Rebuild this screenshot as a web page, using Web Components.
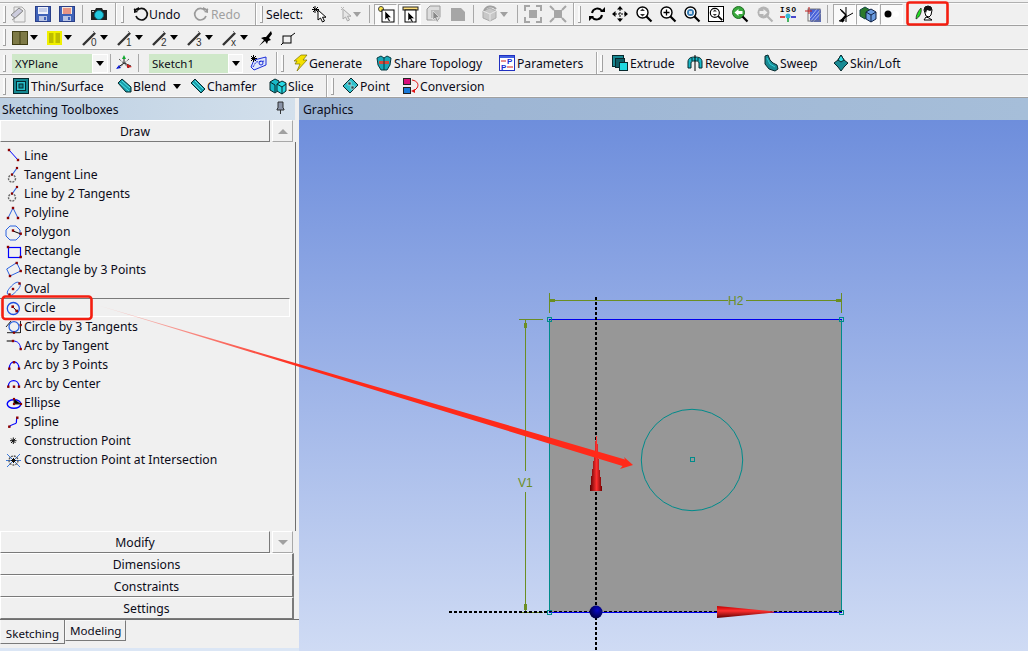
<!DOCTYPE html>
<html>
<head>
<meta charset="utf-8">
<title>Sketching</title>
<style>
  html, body { margin: 0; height: 100%; overflow: hidden; background: #f0f0f0; }
  body { font: 12.2px "Noto Sans", "DejaVu Sans", sans-serif; color: #0b0b18; }
</style>
</head>
<body>

<cad-app>
  <cad-toolbar h="26" pt="3">
    <cad-grip ml="3"></cad-grip>
    <cad-tool icon="newdoc" ml="4" w="17"></cad-tool>
    <cad-tool icon="save" ml="8"></cad-tool>
    <cad-tool icon="saveas" ml="8"></cad-tool>
    <cad-line ml="7"></cad-line>
    <cad-tool icon="camera" ml="8"></cad-tool>
    <cad-end ml="8"></cad-end>
    <cad-grip ml="4"></cad-grip>
    <cad-tool icon="undo" ml="9" w="14" tw="62">Undo</cad-tool>
    <cad-tool icon="redo" w="14" tw="60" class="off">Redo</cad-tool>
    <cad-end ml="0"></cad-end>
    <cad-grip ml="3"></cad-grip>
    <cad-tool ml="3" tw="46">Select:</cad-tool>
    <cad-tool icon="pick" w="16"></cad-tool>
    <cad-tool icon="pickoff" ml="12" w="13"></cad-tool>
    <cad-drop ml="0" off></cad-drop>
    <cad-line ml="8"></cad-line>
    <cad-tool icon="selpoint" ml="4" w="23" box></cad-tool>
    <cad-tool icon="seledge" ml="1" w="23" box></cad-tool>
    <cad-tool icon="selface" ml="5"></cad-tool>
    <cad-tool icon="selbody" ml="8"></cad-tool>
    <cad-line ml="7"></cad-line>
    <cad-tool icon="extend" ml="8"></cad-tool>
    <cad-drop ml="2" off></cad-drop>
    <cad-line ml="9"></cad-line>
    <cad-tool icon="expand" ml="7"></cad-tool>
    <cad-tool icon="shrink" ml="9"></cad-tool>
    <cad-end ml="7"></cad-end>
    <cad-grip ml="3"></cad-grip>
    <cad-tool icon="rotate" ml="8"></cad-tool>
    <cad-tool icon="pan" ml="7"></cad-tool>
    <cad-tool icon="zoomud" ml="8"></cad-tool>
    <cad-tool icon="zoomplus" ml="8"></cad-tool>
    <cad-tool icon="zoomfit" ml="8"></cad-tool>
    <cad-tool icon="zoombox" ml="8"></cad-tool>
    <cad-tool icon="zoomback" ml="8"></cad-tool>
    <cad-tool icon="zoomnext" ml="9"></cad-tool>
    <cad-tool icon="iso" ml="7"></cad-tool>
    <cad-tool icon="plane" ml="9"></cad-tool>
    <cad-line ml="6"></cad-line>
    <cad-tool icon="axes" ml="5" w="23" box></cad-tool>
    <cad-tool icon="cube" ml="0" w="23" box></cad-tool>
    <cad-tool icon="dot" ml="1" w="23" box></cad-tool>
    <cad-tool icon="look" ml="13" w="20"></cad-tool>
  </cad-toolbar>

  <cad-toolbar h="24">
    <cad-grip ml="3"></cad-grip>
    <cad-tool icon="panelolive" ml="6"></cad-tool>
    <cad-drop ml="2"></cad-drop>
    <cad-tool icon="panelyellow" ml="9" w="14"></cad-tool>
    <cad-drop ml="3"></cad-drop>
    <cad-tool icon="l0" ml="10" w="14"></cad-tool>
    <cad-drop ml="4"></cad-drop>
    <cad-tool icon="l1" ml="9" w="14"></cad-tool>
    <cad-drop ml="4"></cad-drop>
    <cad-tool icon="l2" ml="9" w="14"></cad-tool>
    <cad-drop ml="4"></cad-drop>
    <cad-tool icon="l3" ml="9" w="14"></cad-tool>
    <cad-drop ml="4"></cad-drop>
    <cad-tool icon="lx" ml="9" w="14"></cad-tool>
    <cad-drop ml="4"></cad-drop>
    <cad-tool icon="blackplane" ml="9"></cad-tool>
    <cad-tool icon="smallrect" ml="8" w="15"></cad-tool>
  </cad-toolbar>

  <cad-toolbar h="25" pt="2">
    <cad-grip ml="3"></cad-grip>
    <cad-combo ml="6" w="96" fw="80">XYPlane</cad-combo>
    <cad-line ml="2"></cad-line>
    <cad-tool icon="triad" ml="5"></cad-tool>
    <cad-line ml="6"></cad-line>
    <cad-combo ml="10" w="94" fw="79">Sketch1</cad-combo>
    <cad-tool icon="newsketch" ml="8"></cad-tool>
    <cad-end ml="9"></cad-end>
    <cad-grip ml="3"></cad-grip>
    <cad-tool icon="generate" ml="10" w="13" tw="68">Generate</cad-tool>
    <cad-tool icon="share" ml="14" tw="110">Share Topology</cad-tool>
    <cad-tool icon="params" ml="13" tw="84">Parameters</cad-tool>
    <cad-end ml="13"></cad-end>
    <cad-grip ml="2"></cad-grip>
    <cad-tool icon="extrude" ml="9" tw="61">Extrude</cad-tool>
    <cad-tool icon="revolve" ml="14" tw="62">Revolve</cad-tool>
    <cad-tool icon="sweep" ml="14" w="15" tw="55">Sweep</cad-tool>
    <cad-tool icon="loft" ml="16" w="14" tw="67">Skin/Loft</cad-tool>
  </cad-toolbar>

  <cad-toolbar h="23">
    <cad-grip ml="3"></cad-grip>
    <cad-tool icon="thin" ml="7" tw="89">Thin/Surface</cad-tool>
    <cad-tool icon="blend" ml="15" w="14" tw="49">Blend</cad-tool>
    <cad-drop ml="7"></cad-drop>
    <cad-tool icon="chamfer" ml="10" w="14" tw="66">Chamfer</cad-tool>
    <cad-tool icon="slice" ml="13" tw="44">Slice</cad-tool>
    <cad-end ml="12"></cad-end>
    <cad-grip ml="3"></cad-grip>
    <cad-tool icon="point" ml="9" w="15" tw="46">Point</cad-tool>
    <cad-tool icon="conversion" ml="14" w="15" tw="82">Conversion</cad-tool>
  </cad-toolbar>

  <cad-workspace>
    <cad-panel slot="left">
      <cad-header>Sketching Toolboxes<cad-icon slot="end" name="pin"></cad-icon></cad-header>
      <cad-section arrow="up">Draw</cad-section>
      <cad-list>
        <cad-item icon="line">Line</cad-item>
        <cad-item icon="tangent">Tangent Line</cad-item>
        <cad-item icon="tangent">Line by 2 Tangents</cad-item>
        <cad-item icon="polyline">Polyline</cad-item>
        <cad-item icon="polygon">Polygon</cad-item>
        <cad-item icon="rectangle">Rectangle</cad-item>
        <cad-item icon="rect3">Rectangle by 3 Points</cad-item>
        <cad-item icon="oval">Oval</cad-item>
        <cad-item icon="circle" active>Circle</cad-item>
        <cad-item icon="circle3">Circle by 3 Tangents</cad-item>
        <cad-item icon="arctan">Arc by Tangent</cad-item>
        <cad-item icon="arc3">Arc by 3 Points</cad-item>
        <cad-item icon="arccenter">Arc by Center</cad-item>
        <cad-item icon="ellipse">Ellipse</cad-item>
        <cad-item icon="spline">Spline</cad-item>
        <cad-item icon="cpoint">Construction Point</cad-item>
        <cad-item icon="cpointx">Construction Point at Intersection</cad-item>
      </cad-list>
      <cad-section arrow="down">Modify</cad-section>
      <cad-section>Dimensions</cad-section>
      <cad-section>Constraints</cad-section>
      <cad-section>Settings</cad-section>
      <cad-tabs>
        <cad-tab selected>Sketching</cad-tab>
        <cad-tab>Modeling</cad-tab>
      </cad-tabs>
    </cad-panel>
    <cad-graphics slot="right"></cad-graphics>
  </cad-workspace>

  <cad-callouts></cad-callouts>
</cad-app>

<script>
// icons are all drawn on the pixel grid of the original toolbars
const R = '#8b0000', B = '#0000ff';
const dots = (pts, r = 1.5) => pts.map(p => `<rect x="${p[0] - r}" y="${p[1] - r}" width="${r * 2}" height="${r * 2}" fill="${R}"/>`).join('');
const lens = (inner) => `<circle cx="6.5" cy="6.5" r="5.5" fill="#fff" stroke="#000" stroke-width="1.4"/><path d="M10.5 10.5l5 5" stroke="#000" stroke-width="2.2"/>${inner}`;
const cursor = (x, y, fill = '#000') => `<path transform="translate(${x} ${y})" d="M0 0v9l2-2 2 4 1.500-.7-2-3.800h3z" fill="${fill}" stroke="#fff" stroke-width=".5"/>`;
const lineTool = (ch) => `<path d="M1 15L13 3" stroke="#333" stroke-width="2.400"/><path d="M11 1l3 3" stroke="#777"/><text x="9" y="16" font-size="10" font-family="Liberation Sans" fill="#333">${ch}</text>`;
const ICONS = {
  newdoc: `<path d="M4 1h8l3 3v12H4z" fill="#eee" stroke="#aaa"/><path d="M1 9l8-7 4 3-8 7z" fill="#ccd" stroke="#888"/><path d="M2 14l3-2 8-7" stroke="#999" fill="none"/>`,
  save: `<rect x=".5" y=".5" width="15" height="15" fill="#3f62b8" stroke="#2a3f88"/><rect x="3" y="1" width="10" height="7" fill="#eef1fa"/><path d="M4 3h8M4 5h8" stroke="#9aa9d8"/><rect x="4" y="10" width="8" height="5" fill="#b9c4e4"/><rect x="9" y="11" width="2" height="3" fill="#3f62b8"/>`,
  saveas: `<rect x=".5" y=".5" width="15" height="15" fill="#3f62b8" stroke="#2a3f88"/><rect x="3" y="1" width="10" height="7" fill="#f6e9dc"/><path d="M4 3h8M4 5h8M4 7h8" stroke="#d8402c"/><rect x="4" y="10" width="8" height="5" fill="#b9c4e4"/><rect x="9" y="11" width="2" height="3" fill="#3f62b8"/>`,
  camera: `<path d="M0 4h4l1-2h6l1 2h4v10H0z" fill="#222"/><circle cx="8" cy="9" r="4.500" fill="#25c9e0" stroke="#0b6f80"/><rect x="1" y="5" width="2" height="1" fill="#ccc"/>`,
  undo: `<path d="M4 4.500A5.800 5.800 0 1 1 3 10" fill="none" stroke="#111" stroke-width="1.700"/><path d="M0 4h6v-3z M1 2v5l4-1z" fill="#111"/>`,
  redo: `<path d="M10 4.500A5.800 5.800 0 1 0 11 10" fill="none" stroke="#9a9a9a" stroke-width="1.700"/><path d="M14 4H8V1zM13 2v5L9 6z" fill="#9a9a9a"/>`,
  pick: `<path d="M3 0v7M0 3.500h7M1 1l5 5M6 1l-5 5" stroke="#000"/><path d="M6 4v10l2.500-2 2 4 2-1-2-3.800h3.500z" fill="#fff" stroke="#000"/>`,
  pickoff: `<path d="M3 3v10l2.500-2 2 4 2-1-2-3.800h3.500z" fill="#e6e6e6" stroke="#a8a8a8"/><path d="M1 1l3 3M4 1l-3 3" stroke="#b8b8b8"/>`,
  selpoint: `<circle cx="3" cy="3" r="2.500" fill="#ffe94a" stroke="#444"/><rect x="4" y="4" width="12" height="12" fill="#fff" stroke="#000"/>${cursor(7, 5)}`,
  seledge: `<rect x="1" y="1" width="15" height="3" fill="#ffe07a" stroke="#222"/><rect x="3" y="4" width="11" height="12" fill="#fff" stroke="#000"/>${cursor(6, 6)}`,
  selface: `<path d="M1 3l3-3h10v11l-2 3H1z" fill="#ddd" stroke="#9a9a9a"/><path d="M5 4h8v8H5z" fill="#bbb"/>${cursor(7, 5, '#888')}`,
  selbody: `<path d="M1 2h10l4 4v9H1z" fill="#a6a6a6"/>`,
  extend: `<path d="M1 5l7-3 6 3v7l-6 3-7-3z" fill="#c8c8c8" stroke="#aaa"/><path d="M2 5a7 7 0 0 1 12-2" stroke="#a0a0a0" stroke-width="2" fill="none"/><path d="M8 8v7M1 5l7 3 6-3" stroke="#e8e8e8" fill="none"/>`,
  expand: `<rect x="4" y="4" width="8" height="8" fill="#a6a6a6"/><path d="M0 5V0h5M11 0h5v5M16 11v5h-5M5 16H0v-5" stroke="#a6a6a6" stroke-width="2" fill="none"/>`,
  shrink: `<rect x="4" y="4" width="8" height="8" fill="#a6a6a6"/><path d="M0 0l4 4M16 0l-4 4M16 16l-4-4M0 16l4-4" stroke="#a6a6a6" stroke-width="2"/>`,
  rotate: `<path d="M3 7a5.500 5.500 0 0 1 10-2M13 9a5.500 5.500 0 0 1-10 2" fill="none" stroke="#000" stroke-width="2"/><path d="M11 6h5V1zM5 10H0v5z" fill="#000"/>`,
  pan: `<path d="M8 0l3 3.500H5zM8 16l3-3.500H5zM0 8l3.500-3v6zM16 8l-3.500-3v6z" fill="#000"/><path d="M3 8h10M8 3v10" stroke="#000" stroke-dasharray="2 1"/>`,
  zoomud: lens(`<path d="M6.500 2.500l2.500 2.500H4zM6.500 10.500L4 8h5z" fill="#333"/>`),
  zoomplus: lens(`<path d="M3.500 6.500h6M6.500 3.500v6" stroke="#000" stroke-width="1.300"/>`),
  zoomfit: lens(`<circle cx="6.500" cy="6.500" r="3.500" fill="#3a7fb5"/><rect x="5" y="5" width="3" height="3" fill="#cde"/>`),
  zoombox: `<rect x=".5" y=".5" width="15" height="15" fill="#fff" stroke="#000"/><g transform="translate(1.500 1.500) scale(.82)">${lens(`<path d="M6.500 2.500l2.500 2.500H4zM6.500 10.500L4 8h5z" fill="#333"/>`)}</g>`,
  zoomback: `<circle cx="6.500" cy="6.500" r="6" fill="#38a83c" stroke="#1e6e22"/><path d="M10.500 10.500l5 5" stroke="#000" stroke-width="2.200"/><path d="M2.500 6.500l4-3.500v2h4v3h-4v2z" fill="#fff"/>`,
  zoomnext: `<circle cx="6.500" cy="6.500" r="6" fill="#b4b4b4"/><path d="M10.500 10.500l5 5" stroke="#b4b4b4" stroke-width="2.200"/><path d="M10.500 6.500l-4-3.500v2h-4v3h4v2z" fill="#eee"/>`,
  iso: `<text x="0" y="6" font-size="7.500" font-weight="700" font-family="Liberation Mono" fill="#000" textLength="16">ISO</text><circle cx="8" cy="10" r="2.500" fill="#33b8d8"/><path d="M0 11h5" stroke="#d01010" stroke-width="1.500"/><path d="M11 11h5" stroke="#1010c0" stroke-width="1.500"/><path d="M8 12v4" stroke="#10a030" stroke-width="1.500"/>`,
  plane: `<rect x="5" y="3" width="11" height="13" fill="#4a62d8"/><path d="M5 16L16 3M8 16L16 7M5 12l7-9" stroke="#aab8f0"/><rect x="3" y="3" width="12" height="12" fill="none" stroke="#777"/><path d="M0 5h7M4 1v7" stroke="#c02020"/>`,
  axes: `<path d="M9 1v15M2 15L16 7M3 3l6 6" stroke="#000"/><path d="M9 9l-5 6 2 0-1 1zM9 9l-5-5" stroke="#000" stroke-width="1.600"/>`,
  cube: `<path d="M0 4l5-3 5 3v6l-5 3-5-3z" fill="#2c7a2c" stroke="#144"/><path d="M6 6l5-3 5 3v7l-5 3-5-3z" fill="#6a9ce0" stroke="#124"/><path d="M6 6l5 3 5-3M11 9v7" stroke="#124" fill="none"/>`,
  dot: `<circle cx="4" cy="8" r="3.500" fill="#000"/><circle cx="12" cy="8" r="3" fill="#fff"/>`,
  look: `<path d="M0 13C0 9 2 5 5 2 6 6 4 11 0 13z" fill="#22dd22" stroke="#111" stroke-width=".7"/><path d="M8 4a4 4 0 0 1 8 0l-1 5-2 2-3-1-1-3z" fill="#fff" stroke="#000"/><path d="M8 4a4 4 0 0 1 8 0l-2 1-3-1-1 3z" fill="#111"/><path d="M8 14l2-3 3 1 3 2z" fill="#fff" stroke="#000"/>`,
  panelolive: `<rect x=".5" y="1.500" width="15" height="13" fill="#7e7a46" stroke="#3f3d12"/><path d="M8 2v12" stroke="#3f3d12"/>`,
  panelyellow: `<rect x="1" y="2" width="13" height="12" fill="#bdbd00" stroke="#f0f000" stroke-width="2"/><path d="M7.500 2v12" stroke="#f0f000" stroke-width="2"/>`,
  l0: lineTool('0'), l1: lineTool('1'), l2: lineTool('2'), l3: lineTool('3'), lx: lineTool('x'),
  blackplane: `<path d="M9 7l5-6 1 3-3 4 2 2-3 1-1 3-2-3-6 5 5-6-3-2 3-1z" fill="#000"/>`,
  smallrect: `<rect x="2" y="6" width="8" height="7" fill="none" stroke="#000"/><path d="M10 6l4-3M2 13l-2 2" stroke="#000"/>`,
  triad: `<path d="M8 8V2M8 8L1 13M8 8l7 3" stroke="#222"/><path d="M8 0l2 4H6z" fill="#11a830"/><path d="M0 14l3-4 2 3z" fill="#1020e0"/><path d="M16 12l-5-3v4z" fill="#d01818"/><path d="M3 4l10 9M13 4L3 13" stroke="#222" stroke-dasharray="1 1"/>`,
  newsketch: `<path d="M0 12l3-7 12-3v8L3 15z" fill="#dfe6fa" stroke="#1c2ed8"/><path d="M2 12l3-5 9-1" stroke="#1c2ed8" stroke-dasharray="2 1" fill="none"/><circle cx="10" cy="8" r="2" fill="none" stroke="#1c2ed8"/><path d="M0 1l5 5M5 1L0 6M2.500 0v7M0 3.500h6" stroke="#000"/>`,
  generate: `<path d="M7 0h6L9 5h4L3 16l3-7H1l2-3H0z" fill="#f4e000" stroke="#7a7000" stroke-width=".7"/>`,
  share: `<path d="M1 3l4-2 3 2 3-2 4 2-1 7-3 5H5l-3-5z" fill="#18a8b8" stroke="#063b42"/><path d="M3 6h10v3H3z" fill="#d84838"/><path d="M8 3v12" stroke="#063b42"/>`,
  params: `<rect x=".5" y=".5" width="15" height="15" fill="#fff" stroke="#2030c0"/><rect x="1" y="1" width="14" height="2" fill="#4060e0"/><text x="8" y="9" font-size="8" font-weight="700" font-family="Liberation Sans" fill="#1a30d0">P</text><text x="2" y="15" font-size="8" font-weight="700" font-family="Liberation Sans" fill="#1a30d0">P</text><path d="M2 6h5M8 12h6" stroke="#d02020"/>`,
  extrude: `<rect x=".5" y=".5" width="11" height="11" fill="#188a94" stroke="#07282c"/><rect x="3.500" y="3.500" width="9" height="9" fill="#0d5e66" stroke="#07282c"/><rect x="7.500" y="7.500" width="8" height="8" fill="#20d8e0" stroke="#07282c"/>`,
  revolve: `<path d="M1 13V7c0-4 3-5 7-5s7 1 7 5v6h-3V8c0-2-2-2-4-2s-4 0-4 2v5z" fill="#18b8c8" stroke="#07282c"/><path d="M8 0v16" stroke="#000"/><path d="M5 3v3M11 3v3" stroke="#07282c"/>`,
  sweep: `<path d="M2 1l3-1 2 5 3 3 4 2 1 4-3 2-6-2-4-5z" fill="#188a94" stroke="#07282c"/><path d="M4 3l3 6 5 3" stroke="#30d0d8" fill="none"/>`,
  loft: `<path d="M7 0l3 5 4 3-4 4-3 4-3-4-4-4 4-3z" fill="#188a94" stroke="#07282c"/><path d="M7 0l3 5-3 2-3-2z" fill="#30d8e0" stroke="#07282c"/>`,
  thin: `<rect x=".5" y=".5" width="15" height="15" fill="#158892" stroke="#07282c"/><rect x="3.500" y="3.500" width="9" height="9" fill="#28c0cc" stroke="#07282c"/><rect x="6" y="6" width="4" height="4" fill="#158892" stroke="#07282c"/>`,
  blend: `<path d="M1 5l4-4 9 8v5H9z" fill="#18a0ac" stroke="#07282c"/><path d="M3 5l9 8M5 3l8 7" stroke="#5ce0e8"/>`,
  chamfer: `<path d="M0 5l4-4 10 10-4 4z" fill="#18a0ac" stroke="#07282c"/><path d="M2 5l8 8M4 3l8 8" stroke="#5ce0e8"/>`,
  slice: `<path d="M0 4l5-3 4 2v9l-4 3-5-3z" fill="#18b8c8" stroke="#07282c"/><path d="M7 6l5-3 4 2v8l-4 3-5-3z" fill="#28d8e4" stroke="#07282c"/><path d="M7 6l5 3 4-3M12 9v7M0 4l5 3v7" stroke="#07282c" fill="none"/>`,
  point: `<path d="M0 8l8-8 7 7-8 8z" fill="#30c0cc" stroke="#07282c"/><rect x="5" y="4" width="3" height="3" fill="#1a4a50" stroke="#fff" stroke-width=".5"/><rect x="8" y="8" width="3" height="3" fill="#1a4a50" stroke="#fff" stroke-width=".5"/>`,
  conversion: `<rect x=".5" y=".5" width="7" height="6" fill="#d8107c" stroke="#222"/><rect x=".5" y="9.500" width="7" height="6" fill="#1878d8" stroke="#222"/><path d="M9 2c6 1 7 5 5 8l-3 3" fill="none" stroke="#e01010"/><path d="M8 13l4-2v4z" fill="#e01010"/>`,
  pin: `<path d="M3 1h5v6l1 1v1H2V8l1-1zM5.500 9v4" fill="#8a94a8" stroke="#222" stroke-width=".9"/>`,
  // tool list icons, 18x18, measured against the list rows
  line: `<path d="M7 3l9 10" stroke="${B}"/>${dots([[7, 3], [16, 13]], 1.2)}`,
  tangent: `<circle cx="10" cy="12.500" r="3.500" fill="none" stroke="#666" stroke-dasharray="2 1" stroke-width="1.400"/><path d="M10 9l5-7" stroke="#2b62e0" stroke-width="1.200"/>${dots([[15, 2], [10, 8.500]], 1.1)}`,
  polyline: `<path d="M6 14l5-10 5 10" fill="none" stroke="#2b62e0"/>${dots([[6, 14], [11, 4], [16, 14]], 1.2)}`,
  polygon: `<path d="M8 3h6l4 4v6l-4 4H8l-4-4V7z" fill="none" stroke="#2b62e0"/><path d="M11 8l8 3" stroke="#000"/>${dots([[11, 7.500], [18.700, 10.700]], 1.200)}`,
  rectangle: `<rect x="6.500" y="5.500" width="12" height="10" fill="none" stroke="${B}" stroke-width="1.200"/>${dots([[6, 5], [18.700, 15]], 1.200)}`,
  rect3: `<path d="M4.700 8l10-6.300 4 8.300-10.700 5z" fill="none" stroke="#2b62e0"/>${dots([[14.700, 2], [18.700, 10], [8, 15]], 1.200)}`,
  oval: `<path d="M6.500 15c-3-2 0-6 3-9s6-5 8-3 0 5-3 8-6 6-8 4z" fill="none" stroke="#2b62e0"/>${dots([[7.500, 14.500], [17.500, 3.500], [11, 9]], 1.200)}`,
  circle: `<circle cx="11.300" cy="9.500" r="6" fill="none" stroke="#1f50e0" stroke-width="1.300"/><path d="M10.700 7.700l4 4.300" stroke="#000"/>${dots([[10.700, 7.700], [14.700, 12]], 1.300)}`,
  circle3: `<circle cx="12" cy="8.700" r="5" fill="none" stroke="#2b62e0" stroke-width="1.300"/><path d="M5 14.700h13M18.500 3v12M4 9l5-6" stroke="#222" fill="none"/>${dots([[18.700, 7], [12, 14.700]], 1.100)}`,
  arctan: `<path d="M4.700 4H11" stroke="#000"/><path d="M11 4c5 0 7.500 3 7.500 8" fill="none" stroke="${B}"/>${dots([[11, 4], [18.700, 12]], 1.200)}`,
  arc3: `<path d="M7.300 12.700c0-9 9.700-9 9.700 0" fill="none" stroke="${B}" stroke-width="1.300"/>${dots([[7.300, 12.700], [12, 6.300], [17, 12.700]], 1.200)}`,
  arccenter: `<path d="M6.300 11.700c0-8 10.700-8 10.700 0" fill="none" stroke="${B}" stroke-width="1.300"/>${dots([[6.300, 11.700], [12, 11.700], [17, 11.700]], 1.200)}`,
  ellipse: `<ellipse cx="12" cy="10" rx="6.800" ry="4.300" fill="none" stroke="${B}" stroke-width="1.400"/><path d="M12 5v5h7" stroke="#333"/>${dots([[12, 5], [12, 10], [19, 10]], 1.100)}`,
  spline: `<path d="M7.300 13.700c2-3 6-2 7-4 .5-1.500-.5-3 1-5" fill="none" stroke="${B}" stroke-width="1.200"/>${dots([[7.300, 13.700], [15.300, 4.700]], 1.200)}`,
  cpoint: `<path d="M11.300 5.500v6.500M8 8.700h6.500M9 6.500l4.500 4.500M13.500 6.500L9 11" stroke="#111"/>`,
  cpointx: `<path d="M5 3l13 13M18 3L5 16M4 9.500h15" stroke="#3a78d8"/><circle cx="11.500" cy="9.500" r="4.500" fill="none" stroke="#555" stroke-dasharray="2 1" stroke-width="1.300"/><path d="M11.500 7v5M9 9.500h5M10 8l3 3M13 8l-3 3" stroke="#111"/>`
};

// shared helper: the ml attribute becomes the host's flow margin
function place(el) {
  if (el.hasAttribute('ml')) el.style.marginLeft = el.getAttribute('ml') + 'px';
}

class CadApp extends HTMLElement {
  constructor() {
    super();
    this.attachShadow({ mode: 'open' }).innerHTML = `
      <style>
        :host { display:flex; flex-direction:column; position:relative; width:1028px; height:651px; overflow:hidden; background:#f0f0f0; }
      </style>
      <slot></slot>`;
  }
}

class CadToolbar extends HTMLElement {
  constructor() {
    super();
    this.attachShadow({ mode: 'open' }).innerHTML = `
      <style>
        :host { display:flex; align-items:center; flex:none; box-sizing:border-box; border-bottom:1px solid #a0a0a0; box-shadow:inset 0 -1px 0 #f8f8f8; white-space:nowrap; }
        :host([pt="3"]) { background:linear-gradient(#f0f0f0 2px,#b0b0b0 2px,#b0b0b0 3px,#fafafa 3px,#fafafa 4px,#f0f0f0 4px); }
      </style>
      <slot></slot>`;
  }
  connectedCallback() {
    this.style.height = this.getAttribute('h') + 'px';
    if (this.hasAttribute('pt')) this.style.paddingTop = this.getAttribute('pt') + 'px';
  }
}

class CadIcon extends HTMLElement {
  constructor() {
    super();
    this.attachShadow({ mode: 'open' });
  }
  connectedCallback() {
    const w = this.getAttribute('w') || 16, h = this.getAttribute('h') || 16;
    this.shadowRoot.innerHTML = `
      <style>:host { display:inline-flex; flex:none; } svg { display:block; overflow:visible; }</style>
      <svg width="${w}" height="${h}" viewBox="0 0 ${w} ${h}">${ICONS[this.getAttribute('name')] || ''}</svg>`;
  }
}

class CadTool extends HTMLElement {
  constructor() {
    super();
    this.attachShadow({ mode: 'open' });
  }
  connectedCallback() {
    place(this);
    const icon = this.getAttribute('icon');
    const w = this.getAttribute('w') || 16;
    const boxed = this.hasAttribute('box');
    this.shadowRoot.innerHTML = `
      <style>
        :host { display:inline-flex; align-items:center; gap:2px; flex:none; }
        :host(.off) { color:#a0a0a0; }
        :host([box]) { height:21px; justify-content:center; background:#fafafa; border:1px solid; border-color:#a8a8a8 #fff #fff #a8a8a8; box-sizing:border-box; }
      </style>
      ${icon ? `<cad-icon name="${icon}" w="${boxed ? 16 : w}"></cad-icon>` : ''}<slot></slot>`;
    if (boxed) this.style.width = w + 'px';
    if (this.hasAttribute('tw')) this.style.width = this.getAttribute('tw') + 'px';
  }
}

// the etched handle at the start of a toolbar group, a line with a short foot
class CadGrip extends HTMLElement {
  constructor() {
    super();
    this.attachShadow({ mode: 'open' }).innerHTML = `
      <style>:host { display:block; flex:none; width:3px; height:17px; background:#fafafa; border-right:1px solid #a0a0a0; border-bottom:1px solid #a0a0a0; box-sizing:border-box; }</style>`;
  }
  connectedCallback() { place(this); }
}

class CadLine extends HTMLElement {
  constructor() {
    super();
    this.attachShadow({ mode: 'open' }).innerHTML = `
      <style>:host { display:block; flex:none; width:1px; height:18px; background:#a8a8a8; }</style>`;
  }
  connectedCallback() { place(this); }
}

// the raised end of a toolbar group
class CadEnd extends HTMLElement {
  constructor() {
    super();
    this.attachShadow({ mode: 'open' }).innerHTML = `
      <style>:host { display:block; flex:none; width:2px; align-self:stretch; background:#a8a8a8; border-right:1px solid #fff; box-sizing:border-box; }</style>`;
  }
  connectedCallback() { place(this); }
}

class CadDrop extends HTMLElement {
  constructor() {
    super();
    this.attachShadow({ mode: 'open' }).innerHTML = `
      <style>
        :host { display:block; flex:none; width:0; height:0; border:4px solid transparent; border-top:5px solid #000; border-bottom:0; }
        :host([off]) { border-top-color:#a0a0a0; }
      </style>`;
  }
  connectedCallback() { place(this); }
}

class CadCombo extends HTMLElement {
  constructor() {
    super();
    this.attachShadow({ mode: 'open' }).innerHTML = `
      <style>
        :host { display:flex; flex:none; height:19px; box-sizing:border-box; background:#fff; line-height:19px; font-size:11.400px; }
        .field { background:#cfe8c9; padding-left:3px; box-sizing:border-box; height:100%; }
        .btn { flex:1; display:flex; align-items:center; justify-content:center; background:#f4f4f4; border:1px solid #fff; }
        .btn i { width:0; height:0; border:4px solid transparent; border-top:5px solid #000; border-bottom:0; }
      </style>
      <div class="field"><slot></slot></div>
      <div class="btn"><i></i></div>`;
  }
  connectedCallback() {
    place(this);
    this.style.width = this.getAttribute('w') + 'px';
    this.shadowRoot.querySelector('.field').style.width = this.getAttribute('fw') + 'px';
  }
}

class CadWorkspace extends HTMLElement {
  constructor() {
    super();
    this.attachShadow({ mode: 'open' }).innerHTML = `
      <style>
        :host { display:grid; grid-template-columns:299px 1fr; flex:1; min-height:0; }
      </style>
      <slot name="left"></slot><slot name="right"></slot>`;
  }
}

class CadPanel extends HTMLElement {
  constructor() {
    super();
    this.attachShadow({ mode: 'open' }).innerHTML = `
      <style>
        :host { display:flex; flex-direction:column; min-height:0; background:#f0f0f0; }
      </style>
      <slot></slot>`;
  }
}

class CadHeader extends HTMLElement {
  constructor() {
    super();
    this.attachShadow({ mode: 'open' }).innerHTML = `
      <style>
        :host { display:flex; align-items:center; justify-content:space-between; flex:none; box-sizing:border-box; width:295px; height:22px; padding:0 4px 0 2px; background:linear-gradient(90deg,#bccfe2,#d3e0ec); }
      </style>
      <span><slot></slot></span><slot name="end"></slot>`;
  }
}

class CadSection extends HTMLElement {
  constructor() {
    super();
    this.attachShadow({ mode: 'open' }).innerHTML = `
      <style>
        :host { display:flex; flex:none; box-sizing:border-box; width:295px; height:22px; gap:2px; padding-right:1px; }
        .label { flex:1; display:flex; align-items:center; justify-content:center; background:#f0f0f0; border:1px solid; border-color:#fff #7a7a7a #7a7a7a #fff; box-sizing:border-box; border-right-width:2px; }
        .arrow { width:21px; display:none; align-items:center; justify-content:center; background:#f0f0f0; border:1px solid; border-color:#fff #a8a8a8 #a8a8a8 #fff; box-sizing:border-box; }
        .arrow i { width:0; height:0; border:5px solid transparent; border-top:0; border-bottom:5px solid #a0a0a0; }
        :host([arrow]) { width:294px; }
        :host([arrow]) .arrow { display:flex; }
        :host([arrow]) .label { border-right-width:1px; }
        :host([arrow="down"]) .arrow i { border-top:5px solid #a0a0a0; border-bottom:0; }
      </style>
      <div class="label"><slot></slot></div>
      <div class="arrow"><i></i></div>`;
  }
}

class CadList extends HTMLElement {
  constructor() {
    super();
    this.attachShadow({ mode: 'open' }).innerHTML = `
      <style>
        :host { display:flex; flex-direction:column; flex:1; min-height:0; box-sizing:border-box; width:296px; padding-top:4px; border-right:1px solid #6e6e6e; }
      </style>
      <slot></slot>`;
  }
}

class CadItem extends HTMLElement {
  constructor() {
    super();
    this.attachShadow({ mode: 'open' });
  }
  connectedCallback() {
    this.shadowRoot.innerHTML = `
      <style>
        :host { display:flex; align-items:center; gap:2px; flex:none; box-sizing:border-box; width:290px; height:19px; padding-left:2px; white-space:nowrap; }
        :host([active]) { border-top:1px solid #7a7a7a; border-right:1px solid #fff; border-bottom:1px solid #fff; }
      </style>
      <cad-icon name="${this.getAttribute('icon')}" w="20" h="18"></cad-icon><slot></slot>`;
  }
}

class CadTabs extends HTMLElement {
  constructor() {
    super();
    this.attachShadow({ mode: 'open' }).innerHTML = `
      <style>
        :host { display:flex; flex:none; height:32px; align-items:flex-start; box-sizing:border-box; width:299px; border-top:1px solid #6e6e6e; background:linear-gradient(#f0f0f0 28px,#dbe6f5 28px); }
      </style>
      <slot></slot>`;
  }
}

class CadTab extends HTMLElement {
  constructor() {
    super();
    this.attachShadow({ mode: 'open' }).innerHTML = `
      <style>
        :host { display:flex; align-items:center; justify-content:center; box-sizing:border-box; height:21px; padding:0 4px; border:1px solid; border-color:#f8f8f8 #7a7a7a #7a7a7a #f8f8f8; font-size:11.600px; }
        :host([selected]) { height:24px; width:65px; padding:3px 0 0; border-top:0; }
      </style>
      <slot></slot>`;
  }
}

class CadGraphics extends HTMLElement {
  constructor() {
    super();
    const dim = '#6b8e23', teal = '#008b8b';
    const handle = ([x, y]) => `<rect x="${x - 2}" y="${y - 2}" width="4" height="4" fill="none" stroke="${teal}"/>`;
    this.attachShadow({ mode: 'open' }).innerHTML = `
      <style>
        :host { display:flex; flex-direction:column; min-width:0; min-height:0; }
        .title { flex:none; height:22px; box-sizing:border-box; padding:0 4px; display:flex; align-items:center; background:linear-gradient(90deg,#9bb3d2,#a6bed9); }
        .view { flex:1; min-height:0; position:relative; background:linear-gradient(#6e8edc,#cfdbf4); }
        svg { position:absolute; inset:0; width:100%; height:100%; }
        text { font:12px "Liberation Sans", sans-serif; fill:${dim}; }
      </style>
      <div class="title">Graphics</div>
      <div class="view">
        <svg viewBox="299 120 729 531" shape-rendering="crispEdges">
          <defs>
            <linearGradient id="cv" x1="0" x2="1" y1="0" y2="0"><stop offset="0" stop-color="#5a0000"/><stop offset=".55" stop-color="#ff3030"/><stop offset="1" stop-color="#700000"/></linearGradient>
            <linearGradient id="ch" x1="0" x2="0" y1="0" y2="1"><stop offset="0" stop-color="#c00000"/><stop offset=".4" stop-color="#ff3030"/><stop offset="1" stop-color="#600000"/></linearGradient>
            <radialGradient id="og" cx=".6" cy=".35" r=".7"><stop offset="0" stop-color="#0808c8"/><stop offset="1" stop-color="#00003a"/></radialGradient>
          </defs>
          <rect x="549.500" y="320" width="292" height="292" fill="#979797"/>
          <path d="M549.500 320v292M841.500 320v292" stroke="${teal}" fill="none"/>
          <path d="M549 319.500h293" stroke="#0000ee" fill="none"/>
          <path d="M549 612.500h293" stroke="#0000ee" stroke-width="1.600" fill="none"/>
          <path d="M549.500 293v20M841.500 293v20M550 300.500h178M746 300.500h95" stroke="${dim}" fill="none"/>
          <path d="M550 299h5v3h-5zM836 299h5v3h-5zM524 323h3v5h-3zM524 604h3v6h-3z" fill="${dim}"/>
          <path d="M519 319.500h24M525.500 320v151M525.500 492v120M519 612.500h24" stroke="${dim}" fill="none"/>
          <text x="728" y="305">H2</text>
          <text x="518" y="487">V1</text>
          <circle cx="692" cy="460" r="50.700" fill="none" stroke="${teal}" shape-rendering="auto"/>
          ${[[692.500, 459.500], [549.500, 319.500], [841.500, 319.500], [549.500, 612.500], [841.500, 612.500]].map(handle).join('')}
          <path d="M596 297V651" stroke="#000" stroke-width="2" stroke-dasharray="3 2" fill="none"/>
          <path d="M449 612H549" stroke="#000" stroke-width="2" stroke-dasharray="3 2" fill="none"/>
          <path d="M549 611.500H842" stroke="#000" stroke-dasharray="3 2" fill="none"/>
          <path d="M596 436l1 0 2 30 2 14 1 11h-12l1-11 2-14z" fill="url(#cv)"/>
          <path d="M717 606l11 1 46 4.500v1l-46 4.500-11 1z" fill="url(#ch)" shape-rendering="auto"/>
          <circle cx="596" cy="612" r="6.500" fill="url(#og)" shape-rendering="auto"/>
        </svg>
      </div>`;
  }
}

// the red markup laid over the finished screenshot
class CadCallouts extends HTMLElement {
  constructor() {
    super();
    this.attachShadow({ mode: 'open' }).innerHTML = `
      <style>
        :host { position:absolute; inset:0; pointer-events:none; }
        svg { position:absolute; inset:0; }
      </style>
      <svg width="1028" height="651" viewBox="0 0 1028 651">
        <defs>
          <linearGradient id="fade" gradientUnits="userSpaceOnUse" x1="95" y1="305" x2="300" y2="365">
            <stop offset="0" stop-color="#ff2a1a" stop-opacity=".1"/><stop offset="1" stop-color="#ff2a1a"/>
          </linearGradient>
        </defs>
        <rect x="2.500" y="296.500" width="89" height="22.500" rx="3" fill="none" stroke="#f41e10" stroke-width="2.600"/>
        <rect x="907.500" y="2.500" width="40" height="22" rx="2" fill="none" stroke="#f41e10" stroke-width="2.600"/>
        <path d="M97 305L625 459.500 624 457 633 465 620 469 622.500 466z" fill="url(#fade)"/>
      </svg>`;
  }
}

customElements.define('cad-app', CadApp);
customElements.define('cad-toolbar', CadToolbar);
customElements.define('cad-icon', CadIcon);
customElements.define('cad-tool', CadTool);
customElements.define('cad-grip', CadGrip);
customElements.define('cad-line', CadLine);
customElements.define('cad-end', CadEnd);
customElements.define('cad-drop', CadDrop);
customElements.define('cad-combo', CadCombo);
customElements.define('cad-workspace', CadWorkspace);
customElements.define('cad-panel', CadPanel);
customElements.define('cad-header', CadHeader);
customElements.define('cad-section', CadSection);
customElements.define('cad-list', CadList);
customElements.define('cad-item', CadItem);
customElements.define('cad-tabs', CadTabs);
customElements.define('cad-tab', CadTab);
customElements.define('cad-graphics', CadGraphics);
customElements.define('cad-callouts', CadCallouts);
</script>
</body>
</html>
